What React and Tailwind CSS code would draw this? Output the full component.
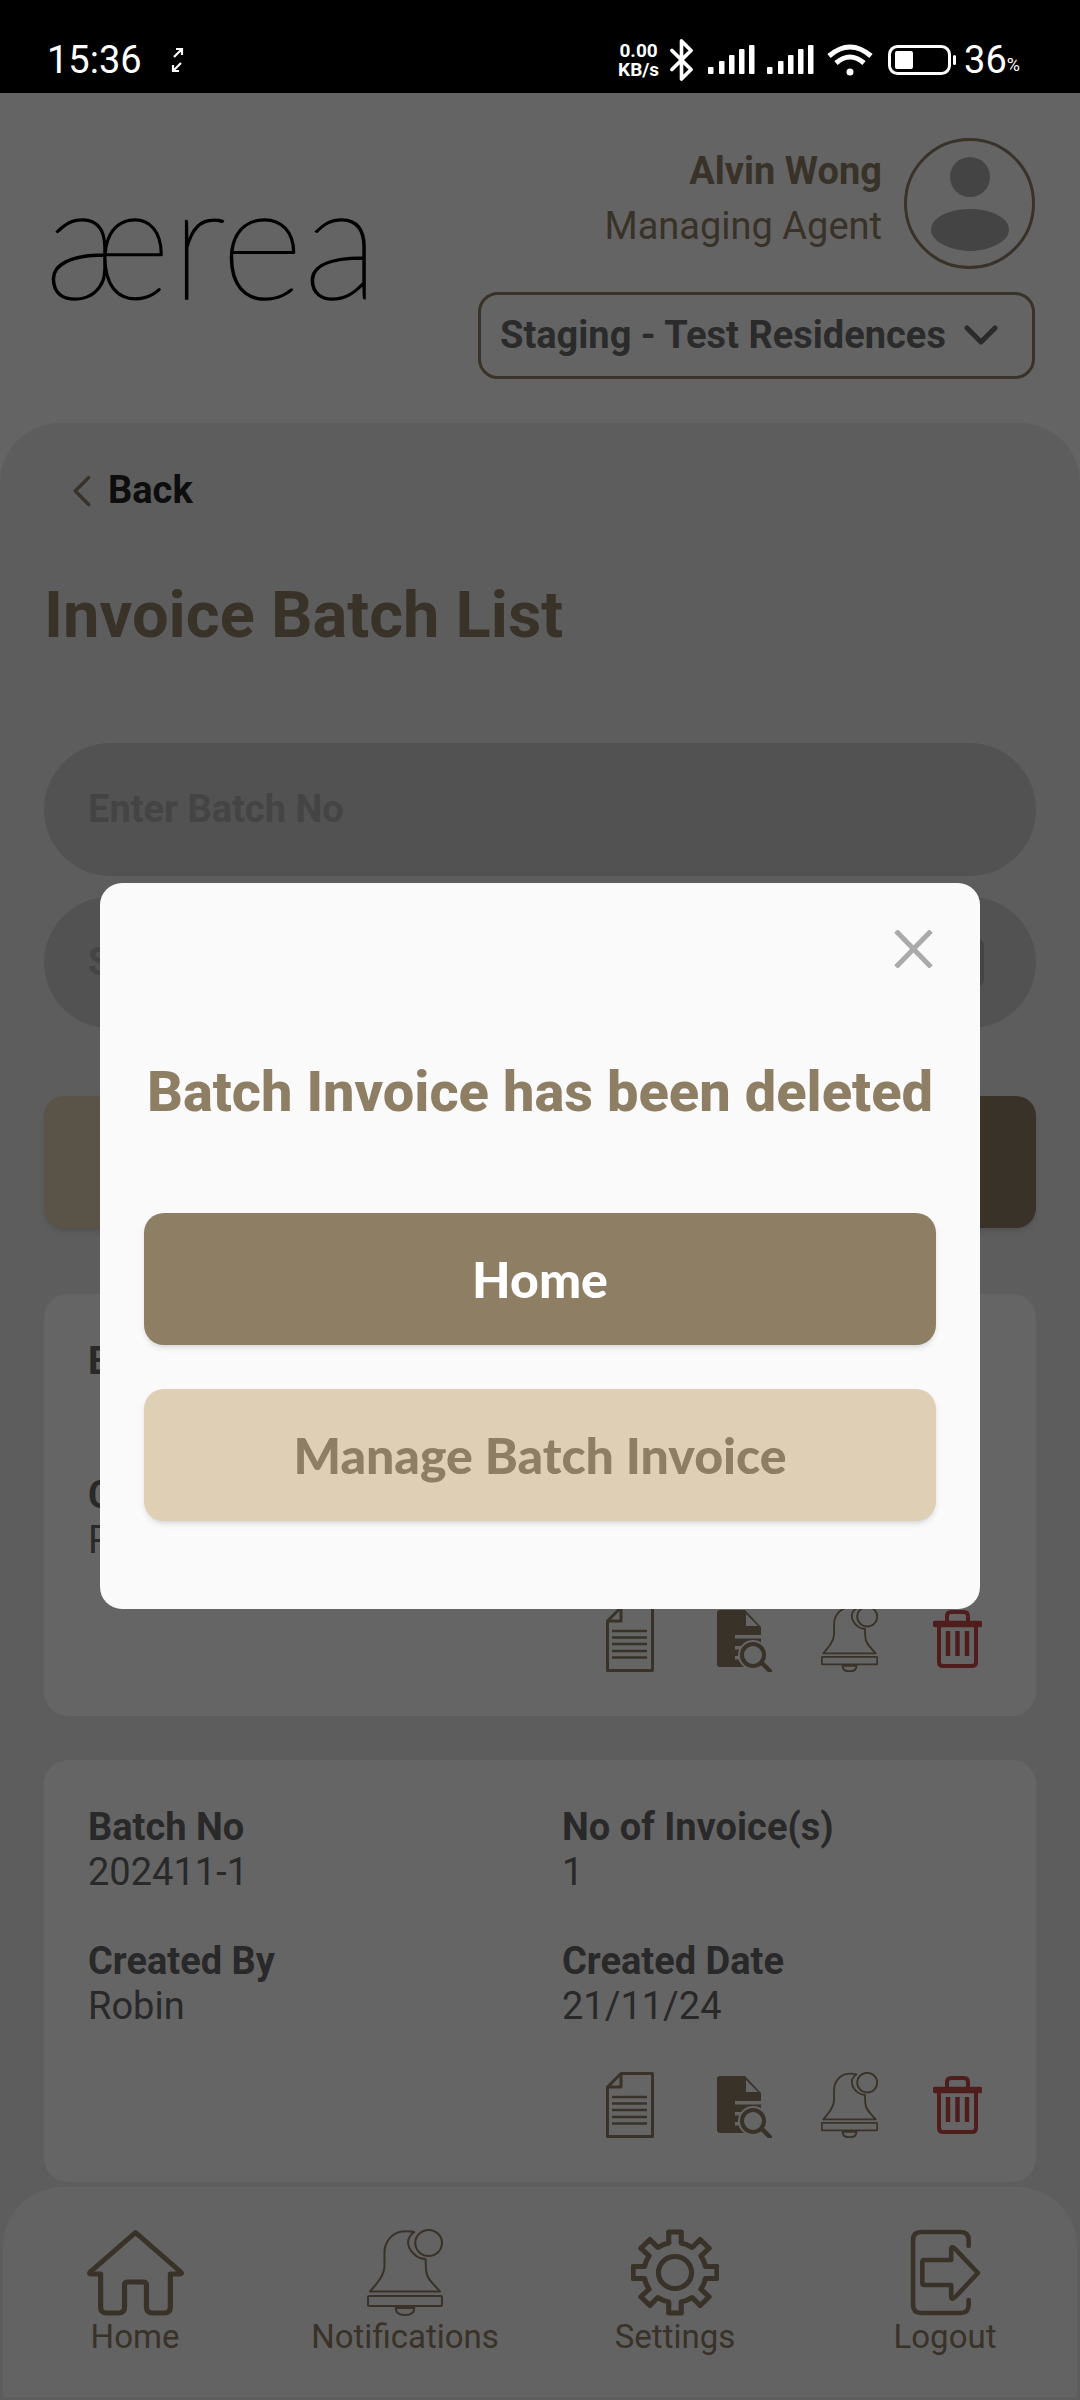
import React from 'react'
import { ChevronDown, ChevronLeft } from 'lucide-react'

const gearPath = () => {
  const cx = 42.5
  const cy = 43.5
  const points = []
  for (let i = 0; i < 8; i++) {
    const a = (i * Math.PI) / 4 - Math.PI / 2
    const steps = [[-0.36, 30], [-0.2, 30], [-0.15, 41], [0.15, 41], [0.2, 30], [0.36, 30]]
    steps.forEach(([off, r]) => {
      points.push(`${(cx + r * Math.cos(a + off)).toFixed(1)} ${(cy + r * Math.sin(a + off)).toFixed(1)}`)
    })
  }
  return `M${points.join(' L')} Z`
}

function StatusBar() {
  return (
    <div className="h-[93px] shrink-0 bg-black text-white flex items-center pt-[26px] pl-[47px] pr-[60px]">
      <span className="text-[38px] leading-[40px] w-[123px]">15:36</span>
      <svg width="15" height="26" viewBox="0 0 15 26" fill="none" stroke="white" strokeWidth="2.2">
        <path d="M4 10 L12 2 M6 2 H12 V8" />
        <path d="M11 16 L3 24 M3 18 V24 H9" />
      </svg>
      <div className="ml-auto flex items-center">
        <div className="flex flex-col items-center font-bold text-[19px] leading-[19px] mr-[11px]">
          <span>0.00</span>
          <span>KB/s</span>
        </div>
        <svg width="23" height="42" viewBox="6 1 12 22" fill="none" stroke="white" strokeWidth="1.9" strokeLinecap="round" strokeLinejoin="round">
          <path d="m7 7 10 10-5 5V2l5 5L7 17" />
        </svg>
        <Signal className="ml-[15px]" />
        <Signal className="ml-[12px]" />
        <svg className="ml-[13px]" width="46" height="32" viewBox="0 0 46 32" fill="none" stroke="white" strokeWidth="5">
          <path d="M2 12 Q23 -6 44 12" />
          <path d="M9 19 Q23 7 37 19" />
          <circle cx="23" cy="28" r="3.5" fill="white" stroke="none" />
        </svg>
        <svg className="ml-[15px]" width="69" height="30" viewBox="0 0 69 30" fill="none">
          <rect x="1.5" y="1.5" width="60" height="27" rx="8" stroke="white" strokeWidth="3" />
          <rect x="7" y="6" width="18" height="18" rx="2" fill="white" />
          <rect x="65" y="10" width="3" height="10" rx="1.5" fill="white" />
        </svg>
        <span className="ml-[7px] text-[38px] leading-[40px]">36</span>
        <span className="text-[18px] leading-[20px] mt-[10px]">%</span>
      </div>
    </div>
  )
}

function Signal({ className }) {
  const bars = [[0, 22], [11, 16], [21, 10], [31, 4], [41, 0]]
  return (
    <svg className={className} width="47" height="29" viewBox="0 0 47 29" fill="white">
      {bars.map(([x, y]) => (
        <rect key={x} x={x} y={y} width="5.5" height={29 - y} rx="1" />
      ))}
    </svg>
  )
}

function Header() {
  return (
    <div className="h-[330px] shrink-0 flex items-center justify-between pl-[44px] pr-[45px]">
      <span className="font-['Lato',sans-serif] font-thin text-[160px] leading-[160px] [-webkit-text-stroke:1.6px_black] text-black -mt-[42px]">ærea</span>
      <div className="flex flex-col items-end">
        <div className="flex items-center">
          <div className="flex flex-col items-end text-[38px] leading-[55px] text-[#8e7e64] mr-[22px] mb-[9px]">
            <span className="font-bold">Alvin Wong</span>
            <span>Managing Agent</span>
          </div>
          <svg width="131" height="131" viewBox="0 0 131 131" fill="none">
            <circle cx="65.5" cy="65.5" r="64" stroke="#8e7e64" strokeWidth="3" />
            <circle cx="66" cy="39" r="20" fill="#aaaaaa" />
            <path d="M27 92 C27 78 48 71 66 71 C84 71 105 78 105 92 C105 104 84 113 66 113 C48 113 27 104 27 92 Z" fill="#aaaaaa" />
          </svg>
        </div>
        <div className="mt-[23px] w-[557px] h-[87px] rounded-[20px] border-[3px] border-[#8e7e64] flex items-center pl-[19px] text-[38px] font-bold text-[#6b6b6b]">
          <span>Staging - Test Residences</span>
          <ChevronDown className="ml-[7px] text-[#6b6b6b]" size={56} strokeWidth={2.2} />
        </div>
      </div>
    </div>
  )
}

function BellIcon({ width, height, strokeWidth }) {
  return (
    <svg width={width} height={height} viewBox="0 0 74 87" preserveAspectRatio="none" fill="none" stroke="#8e7e64" strokeWidth={strokeWidth}>
      <path d="M46 3 C41 2 38 2 34 2.5 C24 4 17 13 17 24 V37 C17 46 10 54 3 62.4 H71 C64 54 58 50 57.5 41 L57 30 C48 30 40 21 40 13 C40 9 42 6 46 3 Z" strokeLinejoin="round" />
      <circle cx="60" cy="14" r="13" />
      <rect x="1" y="67" width="72" height="10" rx="1" />
      <path d="M28 79 H46 C46 85 41 86 37 86 C33 86 28 85 28 79 Z" />
    </svg>
  )
}

function CardIcons() {
  return (
    <div className="mt-[43px] h-[66px] flex items-start justify-end pr-[54px]">
      <svg width="48" height="66" viewBox="0 0 48 66" fill="none" stroke="#8e7e64" strokeLinejoin="round">
        <path d="M15 1.5 H46.5 V64.5 H1.5 V15 Z" strokeWidth="3" />
        <path d="M15 1.5 V15 H1.5" strokeWidth="3" />
        <path d="M6 25 H41 M6 31.5 H41 M6 38 H41 M6 45 H41 M6 51.5 H41" strokeWidth="2.6" />
      </svg>
      <svg className="ml-[63px]" width="55" height="66" viewBox="0 0 55 66">
        <path d="M3 4 H28 L44 21 V61 H3 Q0 61 0 58 V7 Q0 4 3 4 Z" fill="#8e7e64" />
        <path d="M29 8 L41 20 H29 Z" fill="#fdfdfd" />
        <rect x="18" y="29" width="26" height="3.5" fill="#fdfdfd" />
        <rect x="18" y="40" width="12" height="3.5" fill="#fdfdfd" />
        <rect x="18" y="50" width="9" height="3.5" fill="#fdfdfd" />
        <circle cx="36" cy="49" r="15" fill="#fdfdfd" />
        <circle cx="36" cy="49" r="11" fill="none" stroke="#8e7e64" strokeWidth="4" />
        <path d="M45 57 L53 65" stroke="#8e7e64" strokeWidth="4.5" strokeLinecap="round" />
      </svg>
      <div className="ml-[49px]">
        <BellIcon width={57} height={66} strokeWidth={2.4} />
      </div>
      <svg className="ml-[55px]" width="49" height="66" viewBox="0 0 49 66" fill="none" stroke="#c84a4a">
        <path d="M14 15 V10 Q14 6 18 6 H31 Q35 6 35 10 V15" strokeWidth="4" />
        <rect x="1" y="16" width="47" height="4" rx="1" strokeWidth="2.5" fill="#c84a4a" />
        <path d="M6 21 V56 Q6 60 10 60 H39 Q43 60 43 56 V21" strokeWidth="4" />
        <path d="M15 25 V50 M24.5 25 V50 M34 25 V50" strokeWidth="4.5" />
      </svg>
    </div>
  )
}

function Field({ label, value }) {
  return (
    <div className="text-[38px] leading-[45px] text-[#666666]">
      <div className="font-bold">{label}</div>
      <div className="h-[45px]">{value}</div>
    </div>
  )
}

function BatchCard({ batchNo, invoices, createdDate, className }) {
  return (
    <div className={`rounded-[24px] bg-[#fdfdfd] pt-[45px] pb-[44px] pl-[44px] ${className}`}>
      <div className="grid grid-cols-[474px_1fr] gap-y-[44px]">
        <Field label="Batch No" value={batchNo} />
        <Field label="No of Invoice(s)" value={invoices} />
        <Field label="Created By" value="Robin" />
        <Field label="Created Date" value={createdDate} />
      </div>
      <CardIcons />
    </div>
  )
}

function NavItem({ label, children }) {
  return (
    <div className="flex flex-col items-center">
      <div className="h-[87px] flex items-center justify-center">{children}</div>
      <span className="text-[33px] leading-[38px] mt-[2px] text-[#8e7e64]">{label}</span>
    </div>
  )
}

function BottomNav() {
  return (
    <div className="mx-[3px] mb-[3px] mt-[5px] h-[210px] rounded-t-[60px] bg-[#f8f8f8] pt-[42px]">
      <div className="-mx-[3px] grid grid-cols-4">
        <NavItem label="Home">
          <svg width="101" height="87" viewBox="0 0 97 87" preserveAspectRatio="none" fill="none" stroke="#8e7e64" strokeWidth="5" strokeLinejoin="round">
            <path d="M48.5 3.5 L5 43 Q3.5 45 6 45 H15 V78 Q15 84 21 84 H32 Q38 84 38 78 V56 Q38 53 41 53 H56 Q59 53 59 56 V78 Q59 84 65 84 H76 Q82 84 82 78 V45 H91 Q93.5 45 92 43 Z" />
          </svg>
        </NavItem>
        <NavItem label="Notifications">
          <BellIcon width={76} height={87} strokeWidth={2} />
        </NavItem>
        <NavItem label="Settings">
          <svg width="88" height="87" viewBox="0 0 85 87" preserveAspectRatio="none" fill="none" stroke="#8e7e64" strokeWidth="5" strokeLinejoin="round">
            <path d={gearPath()} />
            <circle cx="42.5" cy="43.5" r="16" />
          </svg>
        </NavItem>
        <NavItem label="Logout">
          <svg width="71" height="87" viewBox="0 0 69 87" preserveAspectRatio="none" fill="none" stroke="#8e7e64" strokeWidth="4.5" strokeLinecap="round" strokeLinejoin="round">
            <path d="M57 17 V11 Q57 3 49 3 H11 Q3 3 3 11 V76 Q3 84 11 84 H49 Q57 84 57 76 V71" />
            <path d="M14 31 H40 V21 Q40 16 44 20 L66 44 L44 68 Q40 72 40 67 V56 H14 Q12 56 12 54 V33 Q12 31 14 31 Z" />
          </svg>
        </NavItem>
      </div>
    </div>
  )
}

function DeletedModal() {
  return (
    <div className="absolute inset-x-0 top-[93px] bottom-0 bg-black/60 flex items-center justify-center">
      <div className="w-[880px] h-[726px] -mt-[1px] rounded-[22px] bg-[#fafafa] px-[44px] pt-[47px] flex flex-col">
        <div className="flex justify-end pr-[3px]">
          <svg width="39" height="38" viewBox="0 0 39 38" stroke="#aaaaaa" strokeWidth="5">
            <path d="M2 1 L37 37 M37 1 L2 37" />
          </svg>
        </div>
        <h2 className="mt-[92px] text-[56px] leading-[64px] font-extrabold text-center text-[#8e7e64] whitespace-nowrap">Batch Invoice has been deleted</h2>
        <button className="mt-[89px] h-[132px] rounded-[20px] bg-[#8e7e64] text-white font-['Lato',sans-serif] font-black text-[50px] shadow-md">Home</button>
        <button className="mt-[44px] h-[132px] rounded-[20px] bg-[#dfcfb4] text-[#8e7e64] font-['Lato',sans-serif] font-black text-[50px] shadow-md">Manage Batch Invoice</button>
      </div>
    </div>
  )
}

export default function App() {
  return (
    <div className="relative w-[1080px] h-[2400px] overflow-hidden bg-[#fafafa] flex flex-col font-['Roboto',sans-serif]">
      <StatusBar />
      <Header />
      <div className="flex-1 rounded-t-[60px] bg-[#e8e8e8] flex flex-col">
        <div className="px-[44px] pt-[45px]">
          <div className="flex items-center h-[45px] pl-[11px]">
            <ChevronLeft className="text-[#8e7e64]" size={54} strokeWidth={1.5} />
            <span className="-ml-[1px] text-[38px] font-bold text-[#222222]">Back</span>
          </div>
          <h1 className="mt-[65px] text-[65px] leading-[75px] font-bold text-[#8e7e64]">Invoice Batch List</h1>
          <div className="mt-[90px] h-[133px] rounded-full bg-[#cdcdcd] flex items-center pl-[44px] text-[38px] font-bold text-[#aaaaaa]">Enter Batch No</div>
          <div className="mt-[21px] h-[131px] rounded-full bg-[#cdcdcd] flex items-center justify-between pl-[44px] pr-[52px] text-[38px] font-bold text-[#aaaaaa]">
            <span>Status</span>
            <div className="w-[34px] h-[47px] rounded-[6px] bg-[#aaaaaa]" />
          </div>
          <div className="mt-[68px] flex gap-[30px]">
            <div className="flex-1 h-[132px] rounded-[20px] bg-[#dfcfb4] shadow-md" />
            <div className="flex-1 h-[132px] rounded-[20px] bg-[#8e7e64] shadow-md" />
          </div>
          <BatchCard className="mt-[66px]" invoices="1" createdDate="21/11/24" />
          <BatchCard className="mt-[44px]" batchNo="202411-1" invoices="1" createdDate="21/11/24" />
        </div>
        <BottomNav />
      </div>
      <DeletedModal />
    </div>
  )
}
